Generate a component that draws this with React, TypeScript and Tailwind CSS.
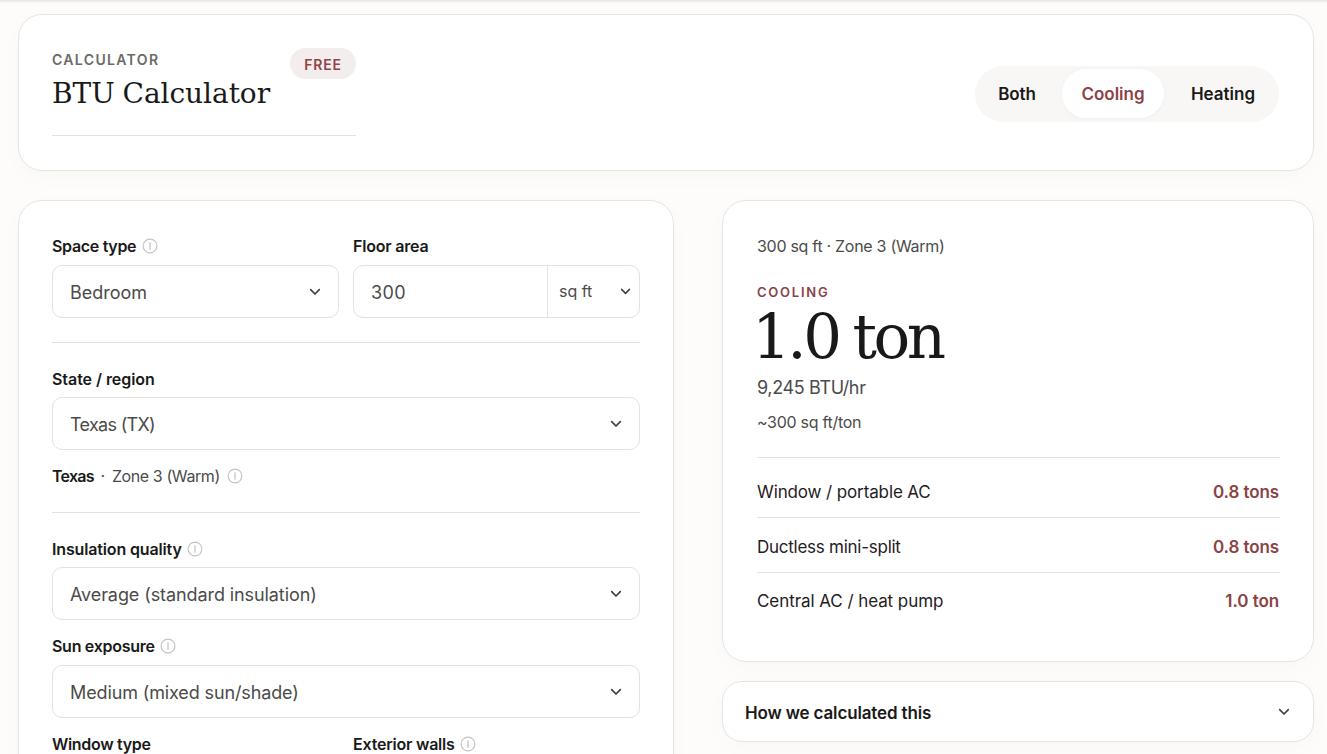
import type { ReactNode } from "react";

const cardShadow = "border border-[#e8e5df] bg-white shadow-[0_6px_24px_rgba(60,50,30,0.02)]";

function Chevron({ size = 12 }: { size?: number }) {
  return (
    <svg width={size} height={size} viewBox="0 0 12 12" fill="none" stroke="#3f3f46" strokeWidth="1.7" strokeLinecap="round" strokeLinejoin="round">
      <path d="M1.7 3.7 6 8l4.3-4.3" />
    </svg>
  );
}

function Info() {
  return (
    <svg width="16" height="16" viewBox="0 0 16 16" fill="none" stroke="#c2c2c2" strokeWidth="1.1">
      <circle cx="8" cy="8" r="6.9" />
      <path d="M8 4.2v7.6" strokeWidth="1.2" />
    </svg>
  );
}

function Label({ children, info, track }: { children: ReactNode; info?: boolean; track: string }) {
  return (
    <div className="flex h-6 items-center gap-[5.5px] text-[16px] font-semibold leading-6 text-[#191a18]">
      <span className={track}>{children}</span>
      {info && <Info />}
    </div>
  );
}

function Select({ children, track, className = "" }: { children: ReactNode; track: string; className?: string }) {
  return (
    <div className={`flex h-[53px] items-center justify-between rounded-[10px] border border-[#e3e2df] bg-white pl-[17px] pr-[17px] text-[18px] text-[#4b4b49] ${className}`}>
      <span className={`pt-0.5 ${track}`}>{children}</span>
      <Chevron />
    </div>
  );
}

function ResultRow({ name, value, track }: { name: string; value: string; track: string }) {
  return (
    <div className="flex items-center justify-between text-[17px] leading-6">
      <span className={`text-[#1f201e] ${track}`}>{name}</span>
      <span className="pr-px font-semibold tracking-[-0.005em] text-[#8b4346]">{value}</span>
    </div>
  );
}

export default function App() {
  return (
    <div className="h-[754px] w-[1327px] overflow-hidden bg-[#fdfcfa] font-['Inter','Liberation_Sans',sans-serif] text-[#191a18]">
      <div className="h-[3px] bg-gradient-to-b from-[#e6e4e2] to-[#fdfcfa]" />
      <div className="pl-[18px] pr-[13px] pt-[11px]">
        <header className={`flex h-[157px] justify-between rounded-[24px] pl-[33px] pr-[34px] ${cardShadow}`}>
          <div className="mt-[33px] flex h-[88px] w-[304px] justify-between border-b border-[#e3e2df]">
            <div>
              <div className="h-7 pt-0.5 text-[14px] font-semibold leading-5 tracking-[1.35px] text-[#6a6a69]">CALCULATOR</div>
              <h1 className="whitespace-nowrap font-['DejaVu_Serif',serif] text-[28px] font-normal leading-9 tracking-[-0.05px] [word-spacing:-1px]">BTU Calculator</h1>
            </div>
            <div className="flex h-[31px] w-[66px] items-center justify-center rounded-full bg-[#f3eeed] pt-0.5 text-[14px] font-semibold tracking-[0.06em] text-[#8f4547]">FREE</div>
          </div>
          <nav className="mt-[51px] flex h-[56px] w-[304px] items-center rounded-full bg-[#f9f7f6] text-[17px] font-semibold">
            <button className="w-[87px] pr-[3px] pt-0.5 tracking-[-0.01em]">Both</button>
            <button className="-mt-0.5 h-[49px] w-[102px] rounded-full bg-white pt-1 text-[#8b4346] shadow-[0_1px_5px_rgba(0,0,0,0.035)]">Cooling</button>
            <button className="w-[115px] pl-[3px] pt-0.5">Heating</button>
          </nav>
        </header>

        <main className="mt-[29px] flex items-start gap-12">
          <section className={`h-[700px] w-[656px] shrink-0 rounded-[24px] px-[33px] pt-[33px] ${cardShadow}`}>
            <div className="flex gap-[14px] border-b border-[#e3e2df] pb-6">
              <div className="w-[287px]">
                <Label info track="tracking-[-0.02em]">Space type</Label>
                <Select className="mt-[7px]" track="tracking-[0em]">Bedroom</Select>
              </div>
              <div className="w-[287px]">
                <Label track="tracking-[-0.013em]">Floor area</Label>
                <div className="mt-[7px] flex h-[53px] rounded-[10px] border border-[#e3e2df] text-[18px] text-[#4b4b49]">
                  <div className="flex w-[194px] items-center border-r border-[#e3e2df] pl-[17px] pt-0.5 tracking-[0.02em]">300</div>
                  <div className="flex flex-1 items-center justify-between pl-[11px] pr-2 text-[16px]">
                    <span className="pb-0.5">sq ft</span>
                    <Chevron size={11} />
                  </div>
                </div>
              </div>
            </div>
            <div className="border-b border-[#e3e2df] py-6">
              <Label track="tracking-[-0.004em]">State / region</Label>
              <Select className="mt-1.5" track="tracking-[-0.038em]">Texas (TX)</Select>
              <div className="mt-[14px] flex h-6 items-center text-[16px] leading-6 text-[#4b4b49]">
                <span className="font-semibold tracking-[-0.045em] text-[#191a18]">Texas</span>
                <span className="w-[18px] text-center">·</span>
                <span className="mr-[7px] tracking-[-0.025em]">Zone 3 (Warm)</span>
                <Info />
              </div>
            </div>
            <div className="pt-6">
              <Label info track="tracking-[-0.009em]">Insulation quality</Label>
              <Select className="mt-1.5" track="tracking-[-0.005em]">Average (standard insulation)</Select>
            </div>
            <div className="pt-[14px]">
              <Label info track="tracking-[-0.018em]">Sun exposure</Label>
              <Select className="mt-[7px]" track="tracking-[-0.007em]">Medium (mixed sun/shade)</Select>
            </div>
            <div className="flex gap-[14px] pt-[14px]">
              <div className="w-[287px]">
                <Label track="tracking-[-0.02em]">Window type</Label>
              </div>
              <div className="w-[287px]">
                <Label info track="tracking-[-0.013em]">Exterior walls</Label>
              </div>
            </div>
          </section>

          <aside className="w-[592px] shrink-0">
            <section className={`h-[462px] rounded-[24px] pl-[34px] pr-[33px] pt-[33px] ${cardShadow}`}>
              <div className="h-6 text-[16px] leading-6 tracking-[-0.018em] text-[#4b4b49]">300 sq ft · Zone 3 (Warm)</div>
              <div className="mt-6 h-[21px] text-[13px] font-semibold leading-5 tracking-[1.75px] text-[#8b4346]">COOLING</div>
              <div className="-ml-[5px] h-[68px] whitespace-nowrap font-['DejaVu_Serif',serif] text-[61px] leading-[68px] tracking-[-3.5px] [word-spacing:-2px]">1.0 ton</div>
              <div className="mt-[3px] h-7 text-[18px] leading-7 tracking-[-0.02em] text-[#4b4b49]">9,245 BTU/hr</div>
              <div className="mt-2 h-6 text-[16px] leading-6 tracking-[-0.018em] text-[#4b4b49]">~300 sq ft/ton</div>
              <div className="mt-[23px] border-t border-[#e3e2df] pt-[22px]">
                <ResultRow name="Window / portable AC" value="0.8 tons" track="tracking-[-0.007em]" />
              </div>
              <div className="mt-[13px] border-t border-[#e3e2df] pt-[17px]">
                <ResultRow name="Ductless mini-split" value="0.8 tons" track="tracking-[-0.015em]" />
              </div>
              <div className="mt-[13px] border-t border-[#e3e2df] pt-4">
                <ResultRow name="Central AC / heat pump" value="1.0 ton" track="tracking-[-0.004em]" />
              </div>
            </section>
            <section className={`mt-[19px] flex h-[61px] items-center justify-between rounded-[20px] pl-[22px] pr-[23px] ${cardShadow}`}>
              <span className="pt-1 text-[17px] font-semibold tracking-[-0.009em]">How we calculated this</span>
              <Chevron />
            </section>
          </aside>
        </main>
      </div>
    </div>
  );
}
